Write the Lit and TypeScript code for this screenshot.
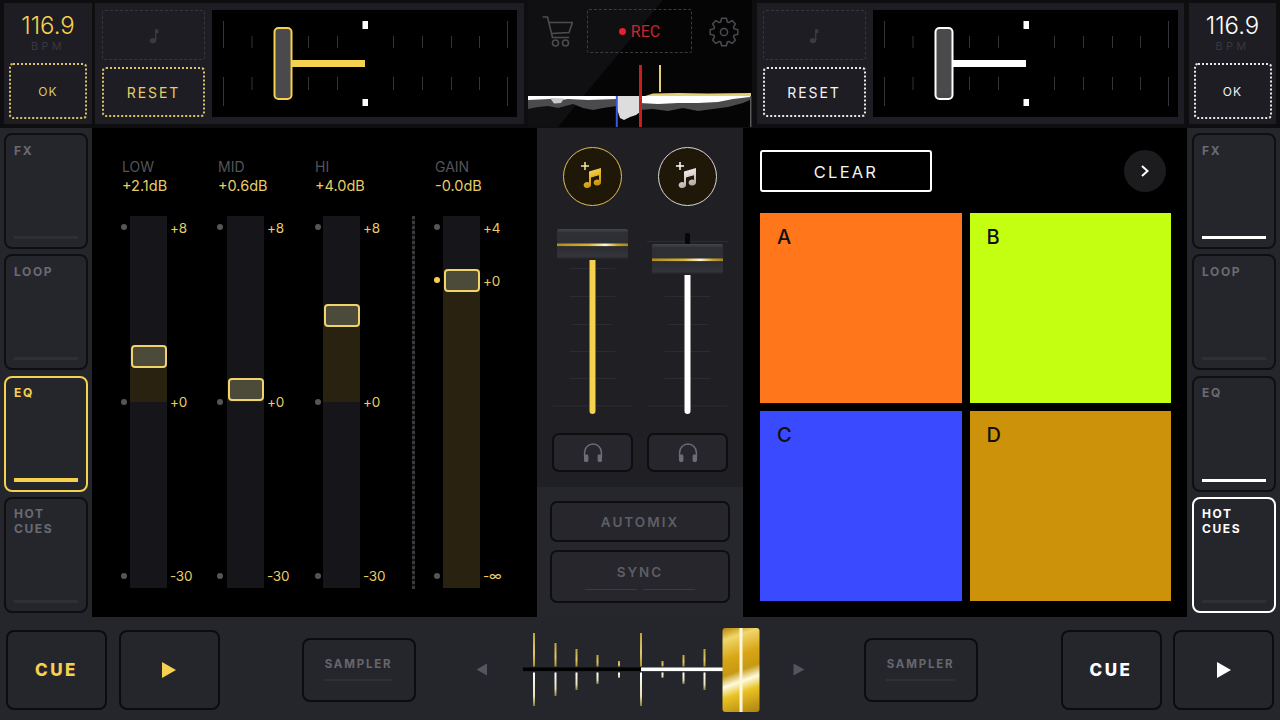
import { LitElement, html, css, svg } from "lit";
import { customElement } from "lit/decorators.js";

const YEL = "#f6d04f";

const gearPath = (() => {
  const cx = 15, cy = 15, n = 8;
  let d = "";
  for (let i = 0; i < n; i++) {
    const a = (i / n) * Math.PI * 2 - Math.PI / 2;
    const pts: [number, number][] = [
      [a - 0.32, 10.6], [a - 0.17, 14], [a + 0.17, 14], [a + 0.32, 10.6],
    ];
    for (const [t, r] of pts) {
      d += `${d ? "L" : "M"}${(cx + r * Math.cos(t)).toFixed(2)} ${(cy + r * Math.sin(t)).toFixed(2)}`;
    }
  }
  return d + "Z";
})();

const noteSmall = () => html`<svg class="note-small" width="10" height="17" viewBox="0 0 10 17">
  <ellipse cx="4" cy="13.6" rx="3.2" ry="2.6" fill="#3a3a40"></ellipse>
  <path d="M6 13V2.2h3.4V6H7.4V13Z" fill="#3a3a40"></path>
</svg>`;

const headphones = () => html`<svg width="22" height="22" viewBox="0 0 22 22">
  <path d="M2.6 15V10.5a8.4 8.4 0 0 1 16.8 0V15" fill="none" stroke="#6c6c74" stroke-width="1.5"></path>
  <rect x="2" y="12.5" width="4.4" height="7.5" rx="1.4" fill="#6c6c74"></rect>
  <rect x="15.6" y="12.5" width="4.4" height="7.5" rx="1.4" fill="#6c6c74"></rect>
</svg>`;

const musicAdd = (id: string, c1: string, c2: string, c3: string) => html`<svg width="59" height="59" viewBox="0 0 59 59">
  <defs>
    <linearGradient id=${id} x1="0" y1="0" x2="0.4" y2="1">
      <stop offset="0" stop-color=${c1}></stop>
      <stop offset="0.5" stop-color=${c2}></stop>
      <stop offset="1" stop-color=${c3}></stop>
    </linearGradient>
  </defs>
  <path d="M26 24.5L38 21V35.5a3.7 3 0 1 1 -2 -2.6V28.2L28 30.5V38a3.7 3 0 1 1 -2 -2.6Z" fill="url(#${id})"></path>
  <path d="M22 15v8M18 19h8" stroke=${c1} stroke-width="1.5" fill="none"></path>
</svg>`;

const pitch = (color: string, handleX: number) => {
  const ticks = [11, 39.5, 96, 125, 181, 210, 239, 267, 295];
  return html`<svg class="pitch" width="305" height="107" viewBox="0 0 305 107">
    ${ticks.map((x, i) => {
      const long = i === 0 || i === 8;
      return svg`
        <rect x=${x} y=${long ? 11 : 26} width="1" height=${long ? 27 : 12} fill="#34343a"></rect>
        <rect x=${x} y="67" width="1" height=${long ? 29 : 13} fill="#34343a"></rect>`;
    })}
    <rect x=${handleX + 18} y="50" width="74" height="7" fill=${color}></rect>
    <rect x=${handleX + 1.5} y="18" width="17" height="71" rx="4" fill="#4a4a4c" stroke=${color} stroke-width="2"></rect>
    <rect x=${handleX + 89.5} y="11" width="5.5" height="8" fill="#fff"></rect>
    <rect x=${handleX + 89.5} y="89" width="5.5" height="7" fill="#fff"></rect>
  </svg>`;
};

interface Ch { name: string; val: string; trackX: number; dotX: number; handle: number; fillTop: number; fillBottom: number; marks: [string, number][]; dots: [number, boolean][]; }
const CHANNELS: Ch[] = [
  { name: "LOW", val: "+2.1dB", trackX: 8, dotX: 2, handle: 129, fillTop: 152, fillBottom: 186, marks: [["+8", 12], ["+0", 186], ["-30", 360]], dots: [[11, false], [185.5, false], [359.5, false]] },
  { name: "MID", val: "+0.6dB", trackX: 9, dotX: 2, handle: 162, fillTop: 185, fillBottom: 186, marks: [["+8", 12], ["+0", 186], ["-30", 360]], dots: [[11, false], [185.5, false], [359.5, false]] },
  { name: "HI", val: "+4.0dB", trackX: 8, dotX: 2.5, handle: 88, fillTop: 110, fillBottom: 186, marks: [["+8", 12], ["+0", 186], ["-30", 360]], dots: [[11, false], [185.5, false], [359.5, false]] },
  { name: "GAIN", val: "-0.0dB", trackX: 8, dotX: 1.5, handle: 53, fillTop: 75, fillBottom: 372, marks: [["+4", 12], ["+0", 65], ["-∞", 360]], dots: [[11, false], [64, true], [359.5, false]] },
];

const mixFader = (id: string, color: string, capY: number, lineTop: number, wide: boolean) => {
  const cx = 47.5;
  const rows: [number, number][] = [[58, 23], [86, 23], [114, 20], [141, 23], [168, 23], [195.5, 40]];
  return html`<svg class="mix" width="95" height="223" viewBox="0 0 95 223">
    <defs>
      <linearGradient id="cap${id}" x1="0" y1="0" x2="0" y2="1">
        <stop offset="0" stop-color="#45464d"></stop>
        <stop offset="0.12" stop-color="#2f3036"></stop>
        <stop offset="0.45" stop-color="#2e2f35"></stop>
        <stop offset="0.55" stop-color="#2a2b30"></stop>
        <stop offset="0.88" stop-color="#34353b"></stop>
        <stop offset="1" stop-color="#1d1d20"></stop>
      </linearGradient>
      <linearGradient id="glint${id}" x1="0" y1="0" x2="1" y2="0">
        <stop offset="0" stop-color="#b48a1c"></stop>
        <stop offset="0.45" stop-color="#d8b32e"></stop>
        <stop offset="0.68" stop-color="#fff7d8"></stop>
        <stop offset="0.85" stop-color="#c9a227"></stop>
        <stop offset="1" stop-color="#a8841c"></stop>
      </linearGradient>
    </defs>
    ${rows.map(([y, half]) => svg`<rect x=${cx - half} y=${y} width=${half * 2} height="1" fill="#2c2c30"></rect>`)}
    ${wide ? svg`<rect x="7" y="31" width="81" height="1" fill="#2c2c30"></rect>
      <rect x="45" y="23" width="5" height="12" rx="2" fill="#070708"></rect>` : null}
    <rect x=${cx - 3} y=${lineTop} width="6" height=${204 - lineTop} rx="3" fill=${color}></rect>
    <rect x=${cx - 35.5} y=${capY} width="71" height="31" rx="2" fill="url(#cap${id})"></rect>
    <rect x=${cx - 35.5} y=${capY + 14.5} width="71" height="2.6" fill="url(#glint${id})"></rect>
  </svg>`;
};

const crossfader = () => {
  const ticks: [number, number][] = [[118, 36.5], [139.5, 26.5], [160.5, 20.5], [181.5, 14.5], [203, 8.5], [225, 36.5], [246.5, 8.5], [267.5, 14.5], [288.5, 20.5]];
  const cy = 50.5;
  return html`<svg class="cross" width="448" height="101" viewBox="0 0 448 101">
    <defs>
      <linearGradient id="tickT" x1="0" y1="0" x2="0" y2="1">
        <stop offset="0" stop-color="#c2a23a"></stop><stop offset="0.6" stop-color="#dcc870"></stop><stop offset="1" stop-color="#b39422"></stop>
      </linearGradient>
      <linearGradient id="tickB" x1="0" y1="0" x2="0" y2="1">
        <stop offset="0" stop-color="#ffffff"></stop><stop offset="0.7" stop-color="#e6e0b8"></stop><stop offset="1" stop-color="#8f7a26"></stop>
      </linearGradient>
      <linearGradient id="gold" gradientUnits="userSpaceOnUse" x1="310" y1="9" x2="340" y2="93">
        <stop offset="0" stop-color="#b98c12"></stop>
        <stop offset="0.12" stop-color="#f0d66a"></stop>
        <stop offset="0.34" stop-color="#d8a514"></stop>
        <stop offset="0.5" stop-color="#c79a14"></stop>
        <stop offset="0.62" stop-color="#fffbe0"></stop>
        <stop offset="0.74" stop-color="#e9c324"></stop>
        <stop offset="1" stop-color="#b08410"></stop>
      </linearGradient>
    </defs>
    <path d=${`M61 ${cy - 6}V${cy + 6}L71.5 ${cy}Z`} transform="rotate(180 66 ${cy})" fill="#55555d"></path>
    <path d=${`M377.5 ${cy - 6}V${cy + 6}L388.5 ${cy}Z`} fill="#55555d"></path>
    ${ticks.map(([x, h]) => svg`
      <rect x=${x - 1} y=${cy - h} width="2" height=${h - 3} fill="url(#tickT)"></rect>
      <rect x=${x - 1} y=${cy + 3} width="2" height=${h - 3} fill="url(#tickB)"></rect>`)}
    <rect x="107" y="48.5" width="118" height="3.6" fill="#000"></rect>
    <rect x="225" y="48.5" width="82" height="3.6" fill="#fff"></rect>
    <rect x="306.5" y="9" width="37" height="84" rx="3" fill="url(#gold)"></rect>
    <rect x="323.5" y="9" width="3" height="84" fill="#fff6de"></rect>
  </svg>`;
};

@customElement("app-root")
export class AppRoot extends LitElement {
  static styles = css`
    :host { display: block; width: 1280px; height: 720px; overflow: hidden; background: #0e0e11; font-family: Inter, "Liberation Sans", sans-serif; --yel: #f6d04f; }
    * { box-sizing: border-box; }
    svg { display: block; flex: none; }

    .top { display: flex; height: 128px; padding-left: 4px; }
    .bpm { width: 88px; height: 121px; margin-top: 3px; background: #1d1d23; display: flex; flex-direction: column; align-items: center; padding-top: 8px; }
    .bpm.r { width: 87px; margin-left: 5px; }
    .num { font-size: 24px; line-height: 29px; font-weight: 300; letter-spacing: 0; color: var(--yel); }
    .white .num { color: #fff; }
    .bpm-l { font-size: 11px; line-height: 13px; letter-spacing: 3.2px; color: #38383e; }
    .ok { width: 78px; height: 56px; margin-top: 10px; border: 2px dotted #d8c26a; border-radius: 4px; display: flex; align-items: center; justify-content: center; font-size: 12px; letter-spacing: 1.2px; font-weight: 400; color: #dcc56a; }
    .white .ok { border-color: #e8e8e8; color: #f2f2f2; }

    .deck { height: 121px; margin-top: 3px; background: #1d1d23; display: flex; padding: 7px; gap: 7px; }
    .deck.l { width: 429px; margin-left: 3px; }
    .deck.r { width: 427px; margin-left: 5px; padding-left: 5.5px; padding-right: 6px; }
    .deck-btns { width: 103px; display: flex; flex-direction: column; gap: 7px; }
    .note { height: 50px; border: 1px dashed #36363c; border-radius: 3px; display: flex; align-items: center; justify-content: center; }
    .reset { height: 50px; border: 2px dotted #d8c26a; border-radius: 4px; display: flex; align-items: center; justify-content: center; font-size: 14px; font-weight: 400; letter-spacing: 1.9px; color: #e6cd66; }
    .white .reset { border-color: #e8e8e8; color: #f4f4f4; }
    .pitch { background: #000; }

    .center { position: relative; width: 224px; margin-left: 4px; height: 127px; background: #050506; display: flex; flex-direction: column; overflow: hidden; }
    .center::before { content: ""; position: absolute; inset: 0; background: #101013; clip-path: polygon(0 0, 135px 0, 30px 100%, 0 100%); }
    .center-head { position: relative; height: 65px; padding: 9px 0 0 14px; display: flex; align-items: flex-start; }
    .cart { margin: 7px 14px 0 0; }
    .rec { width: 105px; height: 44px; border: 1px dashed #3c3c40; border-radius: 2px; display: flex; align-items: center; justify-content: center; gap: 5px; font-family: Roboto, sans-serif; font-size: 16px; color: #c9252e; }
    .rec i { width: 7px; height: 7px; border-radius: 50%; background: #e8202a; }
    .gear { margin: 8px 0 0 17px; }
    .wave { position: relative; }

    .mid { display: flex; height: 489px; }
    .strip { width: 92px; background: #25262c; display: flex; flex-direction: column; gap: 5.33px; padding: 5px 4px 4px 4px; }
    .strip.r { width: 93px; padding-left: 5px; }
    .tab { flex: 1; background: #25262c; border: 2px solid #0f0f12; border-radius: 8px; padding: 7.5px 8px 0; display: flex; flex-direction: column; font-size: 12px; line-height: 15px; font-weight: 700; letter-spacing: 1.6px; color: #6a6a72; white-space: pre-line; }
    .tab .bar { margin-top: auto; margin-bottom: 8px; height: 3px; background: #2f3036; }
    .tab.on { border-color: var(--yel); color: var(--yel); }
    .tab.on .bar { background: var(--yel); height: 4px; }
    .tab.won { border-color: #fff; color: #fff; }
    .tab.wbar .bar { background: #fff; }

    .eq { width: 445px; background: #000; display: grid; grid-template-columns: 96px 97px 98px 22px 1fr; padding: 30px 0 0 30px; }
    .ch-name { font-size: 14px; line-height: 18px; color: #54545a; }
    .ch-val { font-size: 14.5px; line-height: 20px; color: #e6cd66; }
    .fader { position: relative; height: 372px; margin-top: 20px; }
    .track { position: absolute; top: 0; bottom: 0; width: 37px; background: #15151a; }
    .fill { position: absolute; left: 0; right: 0; background: #2a2210; }
    .knob { position: absolute; left: 0.5px; width: 36px; height: 23px; background: #4c4a39; border: 2px solid #f0d46a; border-radius: 4px; }
    .dot { position: absolute; width: 6px; height: 6px; margin: -3px 0 0 -3px; border-radius: 50%; background: #555558; }
    .dot.y { background: var(--yel); }
    .mark { position: absolute; font-size: 13.5px; line-height: 16px; margin-top: -8px; color: #e6cd66; letter-spacing: -0.2px; }
    .divider { grid-column: 4; grid-row: 1; margin-top: 58px; height: 373px; width: 3px; background: repeating-linear-gradient(to bottom, #3a3a3e 0 3px, #141416 3px 5px); margin-left: -1px; }

    .mixer { width: 206px; display: flex; flex-direction: column; }
    .mix-up { height: 359px; background: #202024; display: grid; grid-template-columns: 95px 95px; padding: 19px 8px 0; }
    .mix-col { display: flex; flex-direction: column; align-items: center; }
    .load { width: 59px; height: 59px; border-radius: 50%; background: #1f1809; border: 1.5px solid #e3bf4a; margin-bottom: 4px; display: flex; align-items: center; justify-content: center; }
    .load.w { border-color: #d8d8d8; }
    .load svg { margin: -1.5px; }
    .hp { width: 81px; height: 39px; border: 2px solid #0e0e10; border-radius: 7px; background: #26262c; display: flex; align-items: center; justify-content: center; }
    .mix-low { flex: 1; background: #26272d; display: flex; flex-direction: column; gap: 8px; padding: 14px 13px 0; }
    .wide { border: 2px solid #0e0e10; border-radius: 7px; background: #26262c; display: flex; flex-direction: column; align-items: center; font-size: 13.5px; font-weight: 600; letter-spacing: 2px; color: #5e5e66; }
    .wide.a { height: 41px; justify-content: center; }
    .wide.s { height: 53px; padding-top: 11px; line-height: 18px; }
    .sync-lines { display: flex; gap: 6px; margin-top: 8px; }
    .sync-lines i { width: 52px; height: 1px; background: #3a3b42; }

    .pads { width: 444px; background: #000; padding: 22px 16px 0 17px; }
    .pads-head { display: flex; justify-content: space-between; align-items: center; padding-right: 5.5px; height: 42px; }
    .clear { width: 172px; height: 42px; border: 2px solid #fff; border-radius: 3px; padding-top: 1px; display: flex; align-items: center; justify-content: center; font-size: 16.5px; letter-spacing: 2.2px; color: #f4f4f4; }
    .next { width: 42px; height: 42px; border-radius: 50%; background: #1c1c1f; display: flex; align-items: center; justify-content: center; }
    .pad-grid { display: grid; grid-template-columns: 201.5px 201.5px; grid-template-rows: 190px 190px; gap: 7.5px 8px; margin-top: 21px; }
    .pad { padding: 14px 17px; font-size: 20px; line-height: 21px; font-weight: 500; color: #101008; }

    .bottom { display: flex; align-items: center; height: 103px; padding: 2px 0 0 6px; background: #25262c; }
    .key { width: 101px; height: 80px; flex: none; border: 2px solid #0c0c0f; border-radius: 8px; background: #25262c; display: flex; align-items: center; justify-content: center; font-size: 17px; font-weight: 800; letter-spacing: 2.5px; color: var(--yel); }
    .key.w { color: #fff; }
    .key.gap { margin-left: 11.5px; }
    .sampler { width: 114px; height: 64px; flex: none; border: 2px solid #0c0c0f; border-radius: 8px; background: #25262c; display: flex; flex-direction: column; align-items: center; font-size: 11.5px; font-weight: 700; letter-spacing: 1.8px; color: #66666e; padding-top: 17px; line-height: 14px; }
    .sampler i { width: 69px; height: 2px; background: #2f3036; margin-top: 8px; }
    .s1 { margin-left: 82px; }
    .s2 { margin-right: 83px; }
  `;

  private tab(label: string, cls = "") {
    return html`<div class="tab ${cls}"><span>${label}</span><div class="bar"></div></div>`;
  }

  private channel(c: Ch, i: number) {
    return html`<div style="grid-column:${i < 3 ? i + 1 : 5};grid-row:1">
      <div class="ch-name">${c.name}</div>
      <div class="ch-val">${c.val}</div>
      <div class="fader">
        <div class="track" style="left:${c.trackX}px">
          <div class="fill" style="top:${c.fillTop}px;height:${c.fillBottom - c.fillTop}px"></div>
          <div class="knob" style="top:${c.handle}px"></div>
        </div>
        ${c.dots.map(([y, on]) => html`<div class="dot ${on ? "y" : ""}" style="left:${c.dotX}px;top:${y}px"></div>`)}
        ${c.marks.map(([t, y]) => html`<div class="mark" style="left:${c.trackX + 40}px;top:${y}px">${t}</div>`)}
      </div>
    </div>`;
  }

  render() {
    const playY = html`<svg width="14" height="16" viewBox="0 0 14 16"><path d="M0 0L14 8L0 16Z" fill=${YEL}></path></svg>`;
    const playW = html`<svg width="14" height="16" viewBox="0 0 14 16"><path d="M0 0L14 8L0 16Z" fill="#fff"></path></svg>`;
    return html`
      <div class="top">
        <div class="bpm">
          <div class="num">116.9</div><div class="bpm-l">BPM</div><div class="ok">OK</div>
        </div>
        <div class="deck l">
          <div class="deck-btns"><div class="note">${noteSmall()}</div><div class="reset">RESET</div></div>
          ${pitch(YEL, 61)}
        </div>
        <div class="center">
          <div class="center-head">
            <svg class="cart" width="31" height="31" viewBox="0 0 31 31" fill="none" stroke="#4c4c50" stroke-width="1.6">
              <path d="M0.5 1H5.5L10.5 21.5H27"></path>
              <path d="M7 6.5H30.5L27 16.5L9.4 17.5"></path>
              <circle cx="13.5" cy="27" r="3"></circle><circle cx="23.5" cy="27" r="3"></circle>
            </svg>
            <div class="rec"><i></i><span>REC</span></div>
            <svg class="gear" width="30" height="30" viewBox="0 0 30 30" fill="none" stroke="#4c4c50" stroke-width="1.5" stroke-linejoin="round">
              <path d=${gearPath}></path><circle cx="15" cy="15" r="3.6"></circle>
            </svg>
          </div>
          <svg class="wave" width="224" height="62" viewBox="0 0 224 62">
            <path d="M0 31H89V41L75 43L65 45L55 43L45 39L30 43L20 41L10 42L0 44Z" fill="#4b4b4d"></path>
            <path d="M0 31H89V34L60 35L40 34L33 35L22 34L0 35Z" fill="#fff"></path>
            <path d="M22 33L36 33.5L33 38L26 38.5Z" fill="#c8c8c8"></path>
            <path d="M89 31H112V47L108 50L102 52L96 55L92 53L89 44Z" fill="#dddddd"></path>
            <path d="M112 45L125 44L140 46L155 43L170 46L185 44L200 42L215 38L222 35V31H112Z" fill="#4b4b4d"></path>
            <path d="M112 38L130 39L150 38L170 38L190 37L205 34L222 32V31H112Z" fill="#fff"></path>
            <path d="M117 31L125 28.5L150 28L180 28.5L223 28V31Z" fill="#e6cf72"></path>
            <rect x="222" y="31" width="1.5" height="31" fill="#5a5a5c"></rect>
            <rect x="87.8" y="31" width="2" height="31" fill="#3f56d8"></rect>
            <rect x="111" y="0" width="3" height="62" fill="#c81e1e"></rect>
            <rect x="131" y="0" width="2" height="27" fill="#e6cf72"></rect>
          </svg>
        </div>
        <div class="deck r white">
          <div class="deck-btns"><div class="note">${noteSmall()}</div><div class="reset">RESET</div></div>
          ${pitch("#fff", 61)}
        </div>
        <div class="bpm r white">
          <div class="num">116.9</div><div class="bpm-l">BPM</div><div class="ok">OK</div>
        </div>
      </div>

      <div class="mid">
        <div class="strip">
          ${this.tab("FX")}${this.tab("LOOP")}${this.tab("EQ", "on")}${this.tab("HOT\nCUES")}
        </div>
        <div class="eq">
          ${CHANNELS.map((c, i) => this.channel(c, i))}
          <div class="divider"></div>
        </div>
        <div class="mixer">
          <div class="mix-up">
            <div class="mix-col">
              <div class="load">${musicAdd("mg", "#f5e6a0", "#e8bb2a", "#c8920e")}</div>
              ${mixFader("a", YEL, 19, 40, false)}
              <div class="hp">${headphones()}</div>
            </div>
            <div class="mix-col">
              <div class="load w">${musicAdd("ms", "#ffffff", "#e0d6d6", "#b8a8a8")}</div>
              ${mixFader("b", "#fff", 34, 50, true)}
              <div class="hp">${headphones()}</div>
            </div>
          </div>
          <div class="mix-low">
            <div class="wide a">AUTOMIX</div>
            <div class="wide s">SYNC<div class="sync-lines"><i></i><i></i></div></div>
          </div>
        </div>
        <div class="pads">
          <div class="pads-head">
            <div class="clear">CLEAR</div>
            <div class="next"><svg width="10" height="14" viewBox="0 0 10 14"><path d="M2 2L7.5 7L2 12" fill="none" stroke="#fff" stroke-width="2"></path></svg></div>
          </div>
          <div class="pad-grid">
            <div class="pad" style="background:#ff761b">A</div>
            <div class="pad" style="background:#c4ff12">B</div>
            <div class="pad" style="background:#3a4aff">C</div>
            <div class="pad" style="background:#cc930a">D</div>
          </div>
        </div>
        <div class="strip r">
          ${this.tab("FX", "wbar")}${this.tab("LOOP")}${this.tab("EQ", "wbar")}${this.tab("HOT\nCUES", "won")}
        </div>
      </div>

      <div class="bottom">
        <div class="key">CUE</div>
        <div class="key gap">${playY}</div>
        <div class="sampler s1">SAMPLER<i></i></div>
        ${crossfader()}
        <div class="sampler s2">SAMPLER<i></i></div>
        <div class="key w">CUE</div>
        <div class="key w gap">${playW}</div>
      </div>
    `;
  }
}
